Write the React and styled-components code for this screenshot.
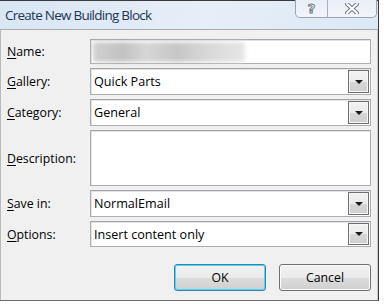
import React from 'react'
import styled, { createGlobalStyle } from 'styled-components'

const Global = createGlobalStyle`
  html, body { margin: 0; padding: 0; background: #ffffff; }
  body { font-family: "Open Sans", "Liberation Sans", sans-serif; }
`

const Window = styled.div`
  width: 379px;
  height: 301px;
  box-sizing: border-box;
  display: flex;
  flex-direction: column;
  border-top: 1px solid #3a3a3a;
  border-right: 1px solid #3a3a3a;
  border-bottom: 1px solid #6a6a6a;
  background: #dfe9f5;
`

const TitleBar = styled.div`
  position: relative;
  height: 28px;
  flex-shrink: 0;
  display: flex;
  align-items: center;
  padding-left: 5px;
  background: linear-gradient(100deg, #d9e6f4 0%, #e6eef8 55%, #dce8f5 100%);
`

const Title = styled.span`
  font-size: 13.5px;
  letter-spacing: -0.75px;
  color: #1e3553;
  padding-bottom: 1px;
`

const Controls = styled.div`
  position: absolute;
  top: -1px;
  right: 1px;
  display: flex;
  height: 17px;
  border: 1px solid #9aa4b0;
  border-top: none;
  border-radius: 0 0 5px 5px;
  background: linear-gradient(#e8eef6, #f2f6fb);
  overflow: hidden;
`

const Ctl = styled.div`
  width: ${p => p.$w}px;
  display: flex;
  align-items: center;
  justify-content: center;
  & + & { border-left: 1px solid #a7b0bb; }
`

const Help = styled.span`
  font-family: "DejaVu Sans", sans-serif;
  font-weight: bold;
  font-size: 13px;
  line-height: 1;
  color: #ffffff;
  -webkit-text-stroke: 1px #707780;
`

const Client = styled.div`
  flex: 1;
  background: #f0f0f0;
  border-top: 1px solid #a6aab0;
  border-left: 1px solid #b9b9b9;
  border-right: 1px solid #c9c9c9;
  padding: 9px 6px 0 6px;
  display: flex;
  flex-direction: column;
`

const Form = styled.div`
  display: grid;
  grid-template-columns: 83px 1fr;
  row-gap: 4px;
`

const Label = styled.label`
  font-size: 12.3px;
  color: #000;
  display: flex;
  align-items: center;
  height: ${p => p.$h}px;
  u { text-decoration: underline; text-underline-offset: 2px; }
`

const Box = styled.div`
  height: ${p => p.$h}px;
  box-sizing: border-box;
  border: 1px solid #abadb3;
  border-top-color: #a0a4ab;
  box-shadow: inset 1px 1px 0 #e3e3e3;
  background: #fff;
  display: flex;
  align-items: center;
  padding: 1px 1px 1px 3px;
  font-size: 12.6px;
  color: #000;
`

const Value = styled.span`
  flex: 1;
`

const Smudge = styled.div`
  width: 152px;
  height: 20px;
  margin-left: -1px;
  background: linear-gradient(90deg, #d0d0d0 0%, #c2c2c2 20%, #d6d6d6 35%, #c6c6c6 55%, #d8d8d8 75%, #e6e6e6 100%);
  filter: blur(2px);
`

const Drop = styled.div`
  width: 21px;
  height: 100%;
  box-sizing: border-box;
  border: 1px solid #707070;
  box-shadow: inset 0 0 0 1px #f6f6f6;
  background: linear-gradient(#f2f2f2 0%, #ebebeb 50%, #d6d6d6 51%, #cfcfcf 100%);
  display: flex;
  align-items: center;
  justify-content: center;
`

const Arrow = styled.div`
  width: 0;
  height: 0;
  border-left: 4px solid transparent;
  border-right: 4px solid transparent;
  border-top: 4px solid #1a1a1a;
`

const Buttons = styled.div`
  display: flex;
  justify-content: flex-end;
  gap: 13px;
  margin-top: 17px;
`

const Btn = styled.button`
  width: 92px;
  height: 27px;
  box-sizing: border-box;
  border: 1px solid ${p => (p.$def ? '#3c7fb1' : '#707070')};
  border-radius: 3px;
  box-shadow: inset 0 0 0 1px ${p => (p.$def ? '#48d9f9' : '#fcfcfc')};
  background: linear-gradient(#f2f2f2 0%, #ebebeb 50%, #dddddd 51%, #cfcfcf 100%);
  font-family: "Open Sans", "Liberation Sans", sans-serif;
  font-size: 12.3px;
  color: #000;
  padding: 0;
`

function Combo({ value, h = 27 }) {
  return (
    <Box $h={h}>
      <Value>{value}</Value>
      <Drop><Arrow /></Drop>
    </Box>
  )
}

export default function App() {
  return (
    <>
      <Global />
      <Window>
        <TitleBar>
          <Title>Create New Building Block</Title>
          <Controls>
            <Ctl $w={31}><Help>?</Help></Ctl>
            <Ctl $w={48}>
              <svg width="14" height="11" viewBox="0 0 14 11">
                <path d="M2 1 L12 10 M12 1 L2 10" stroke="#707780" strokeWidth="4" strokeLinecap="round" />
                <path d="M2 1 L12 10 M12 1 L2 10" stroke="#ffffff" strokeWidth="2" strokeLinecap="round" />
              </svg>
            </Ctl>
          </Controls>
        </TitleBar>
        <Client>
          <Form>
            <Label $h={25}><span><u>N</u>ame:</span></Label>
            <Box $h={25}><Smudge /></Box>

            <Label $h={27}><span><u>G</u>allery:</span></Label>
            <Combo value="Quick Parts" />

            <Label $h={27}><span><u>C</u>ategory:</span></Label>
            <Combo value="General" />

            <Label $h={56}><span><u>D</u>escription:</span></Label>
            <Box $h={56} />

            <Label $h={27}><span><u>S</u>ave in:</span></Label>
            <Combo value="NormalEmail" />

            <Label $h={26}><span><u>O</u>ptions:</span></Label>
            <Combo value="Insert content only" h={26} />
          </Form>
          <Buttons>
            <Btn $def>OK</Btn>
            <Btn>Cancel</Btn>
          </Buttons>
        </Client>
      </Window>
    </>
  )
}
